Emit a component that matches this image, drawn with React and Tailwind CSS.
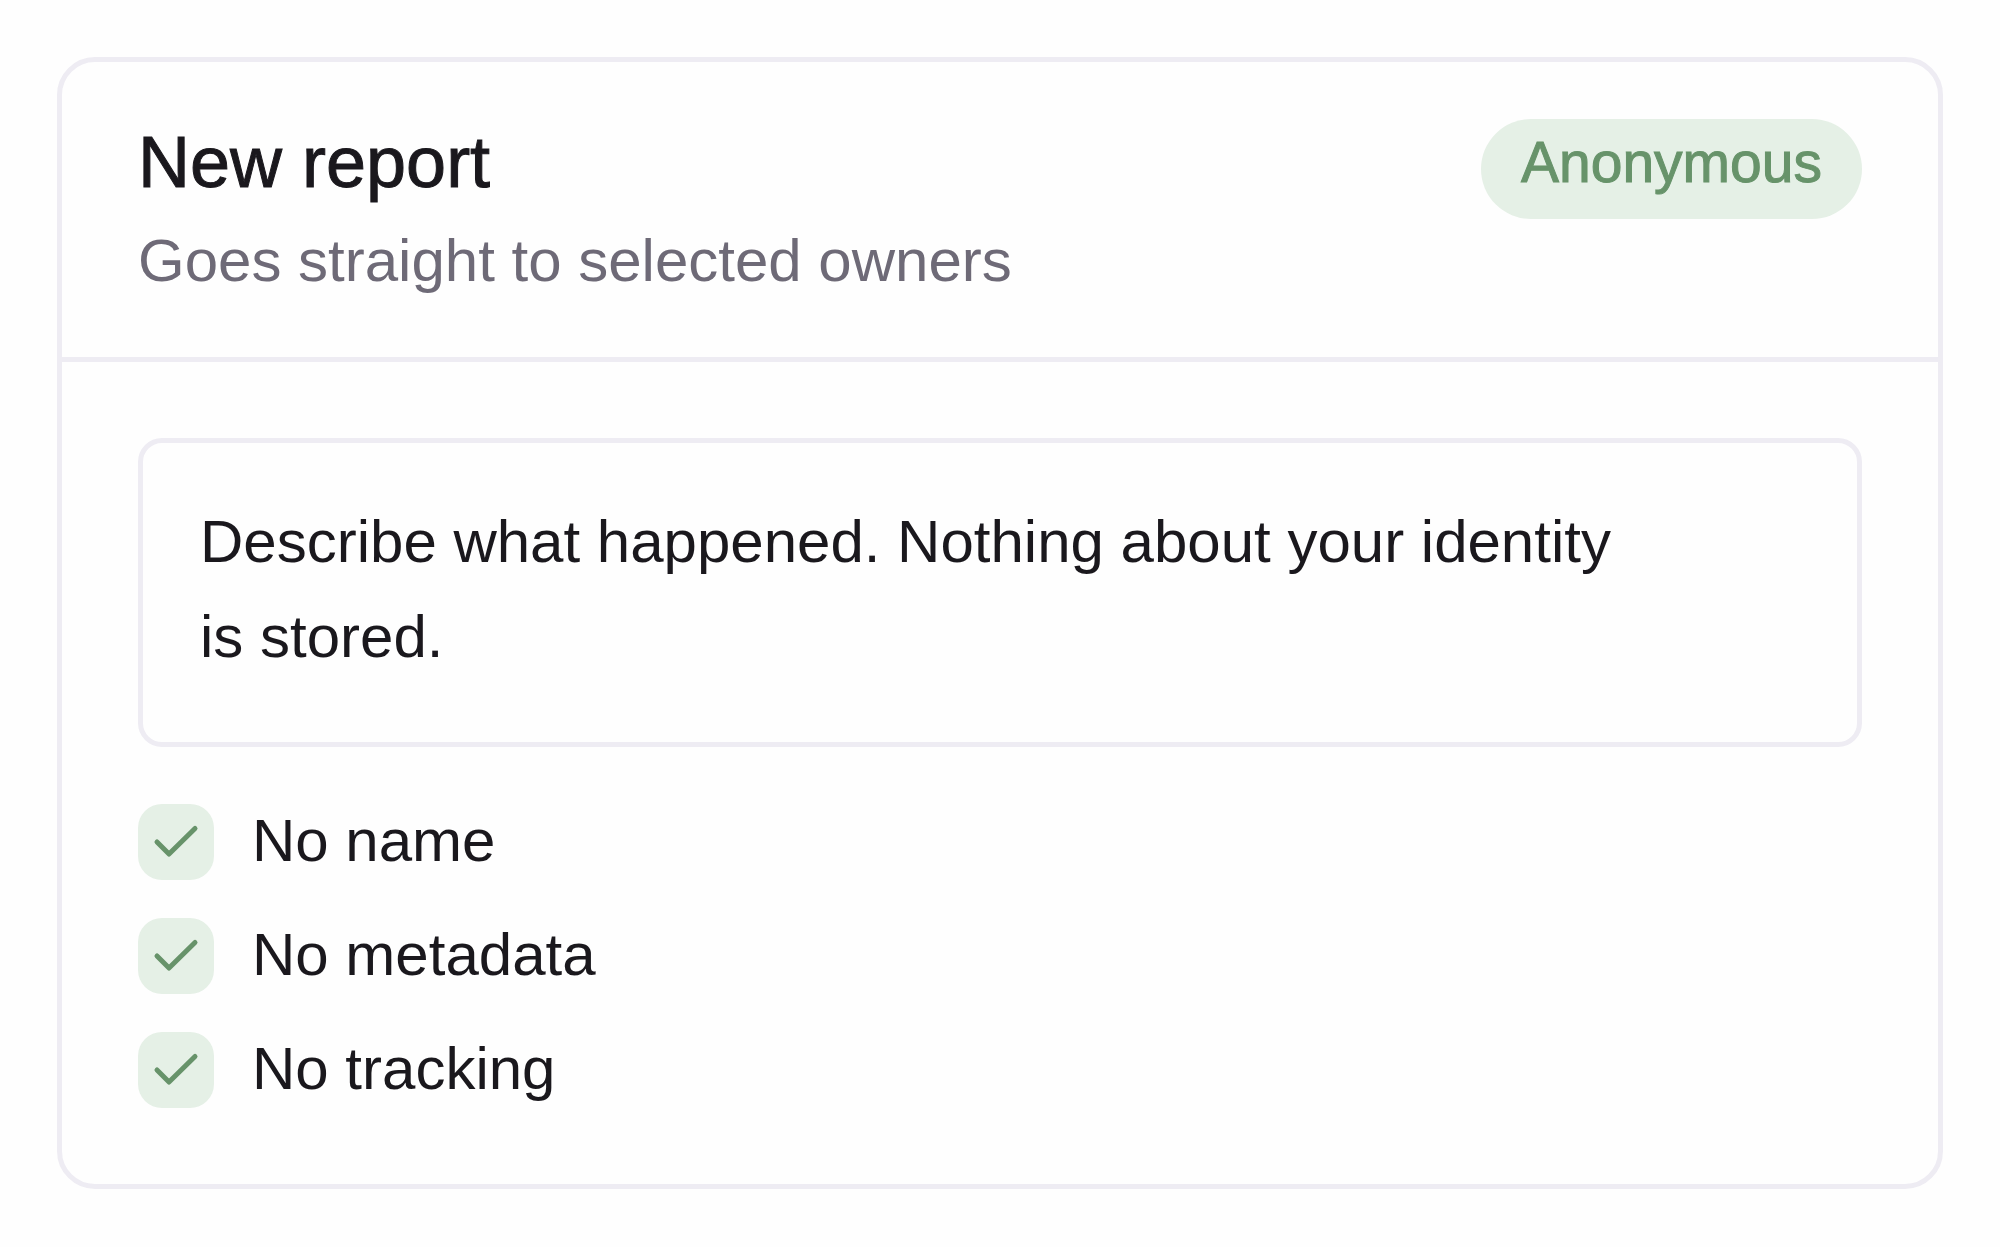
import React from 'react';

const promises = [
  { id: 'no-name', label: 'No name' },
  { id: 'no-metadata', label: 'No metadata' },
  { id: 'no-tracking', label: 'No tracking' },
];

function CheckItem({ id, label }) {
  return (
    <li className="flex items-start gap-[38px]">
      <span className="grid shrink-0">
        <input
          id={id}
          type="checkbox"
          defaultChecked
          className="peer col-start-1 row-start-1 size-[76px] appearance-none rounded-3xl bg-[#e5f0e6]"
        />
        <svg
          viewBox="0 0 76 76"
          fill="none"
          aria-hidden="true"
          className="pointer-events-none invisible col-start-1 row-start-1 size-[76px] peer-checked:visible"
        >
          <path d="M19 38L31 50L57 24.5" stroke="#67936a" strokeWidth="5" strokeLinecap="round" strokeLinejoin="round" />
        </svg>
      </span>
      <label htmlFor={id} className="text-[60px] leading-[74px]">{label}</label>
    </li>
  );
}

export default function App() {
  return (
    <main className="min-h-screen bg-[#fefefe] p-[57px] font-['Liberation_Sans',Arial,sans-serif] text-[#1a181d]">
      <form className="rounded-[38px] border-[5px] border-[#eeecf3]">
        {/* Header */}
        <header className="flex items-start justify-between border-b-[5px] border-[#eeecf3] px-[76px] pt-[57px] pb-[49px]">
          <div>
            <h1 className="text-[72px] leading-[86px] [-webkit-text-stroke:1px_currentColor]">New report</h1>
            <p className="mt-2 text-[60px] leading-[95px] text-[#6e6a77]">Goes straight to selected owners</p>
          </div>
          <span className="rounded-full bg-[#e5f0e6] px-10 pb-[14px] text-[57px] leading-[86px] text-[#67936a] [-webkit-text-stroke:1px_currentColor]">
            Anonymous
          </span>
        </header>

        {/* Report body */}
        <div className="p-[76px]">
          <textarea
            aria-label="Report"
            rows={2}
            defaultValue="Describe what happened. Nothing about your identity is stored."
            className="block h-[309px] w-full resize-none rounded-3xl border-[5px] border-[#eeecf3] pt-[51px] pr-[220px] pb-[57px] pl-[57px] text-[60px] leading-[95px] outline-none"
          />
          <ul className="mt-[57px] flex flex-col gap-[38px]">
            {promises.map((item) => (
              <CheckItem key={item.id} id={item.id} label={item.label} />
            ))}
          </ul>
        </div>
      </form>
    </main>
  );
}
